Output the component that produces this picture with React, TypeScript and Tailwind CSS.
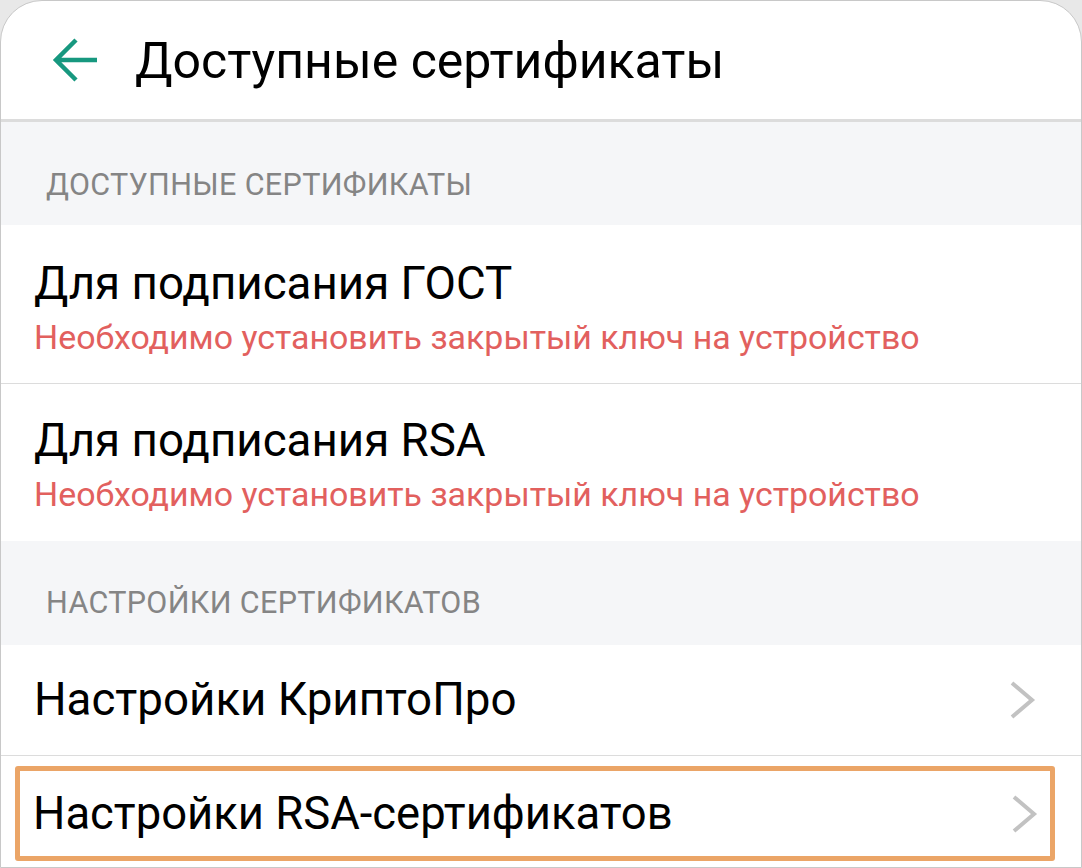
import React from 'react'

const font = { fontFamily: 'Roboto, "Noto Sans", sans-serif' }

function BackArrow() {
  return (
    <svg width="48" height="46" viewBox="0 0 48 46" fill="none" className="shrink-0">
      <path d="M45 23H5M24 3L4 23L24 43" stroke="#17987f" strokeWidth="4.5" strokeLinecap="butt" strokeLinejoin="miter" />
    </svg>
  )
}

function Chevron() {
  return (
    <svg width="28" height="40" viewBox="0 0 28 40" fill="none" className="shrink-0">
      <path d="M3 3L23 20L3 37" stroke="#c2c2c2" strokeWidth="4" />
    </svg>
  )
}

function SectionHeader({ title, className }: { title: string; className: string }) {
  return (
    <div className={`shrink-0 bg-[#f5f6f8] flex items-end pl-[45px] ${className}`}>
      <span className="text-[30.5px] leading-[34px] text-[#858585] tracking-[0.35px]">{title}</span>
    </div>
  )
}

function CertRow({ title, note }: { title: string; note: string }) {
  return (
    <div className="flex flex-col pl-[33px]">
      <div className="text-[45.7px] leading-[54px] text-black">{title}</div>
      <div className="text-[33.9px] leading-[38px] text-[#e2605e] mt-[8px]">{note}</div>
    </div>
  )
}

export default function App() {
  return (
    <div className="w-[1082px] h-[868px] bg-[#e8e8e8] overflow-hidden" style={font}>
      <div className="w-full h-full bg-white border border-[#c8c8c8] rounded-t-[42px] overflow-hidden flex flex-col">
        {/* toolbar */}
        <div className="h-[121px] shrink-0 flex items-center pl-[51px] border-b-[3px] border-[#dcdcdc]">
          <BackArrow />
          <span className="ml-[35px] text-[50px] leading-[60px] text-black mt-[2px]">Доступные сертификаты</span>
        </div>

        <SectionHeader title="ДОСТУПНЫЕ СЕРТИФИКАТЫ" className="h-[103px] pb-[23px]" />

        <div className="h-[159px] shrink-0 flex items-start pt-[32px] border-b border-[#dcdcdc]">
          <CertRow title="Для подписания ГОСТ" note="Необходимо установить закрытый ключ на устройство" />
        </div>
        <div className="h-[157px] shrink-0 flex items-start pt-[30px]">
          <CertRow title="Для подписания RSA" note="Необходимо установить закрытый ключ на устройство" />
        </div>

        <SectionHeader title="НАСТРОЙКИ СЕРТИФИКАТОВ" className="h-[104px] pb-[25px]" />

        <div className="h-[111px] shrink-0 flex items-center justify-between pl-[33px] pr-[44px] border-b border-[#dcdcdc]">
          <span className="text-[45.7px] leading-[54px] text-black">Настройки КриптоПро</span>
          <Chevron />
        </div>

        <div className="flex-1 pl-[14px] pr-[26px] pt-[10px] pb-[6px]">
          <div className="h-full border-[5px] border-[#eba567] rounded-[3px] flex items-center justify-between pl-[13px] pr-[11px]">
            <span className="text-[45.4px] leading-[54px] text-black">Настройки RSA-сертификатов</span>
            <Chevron />
          </div>
        </div>
      </div>
    </div>
  )
}
